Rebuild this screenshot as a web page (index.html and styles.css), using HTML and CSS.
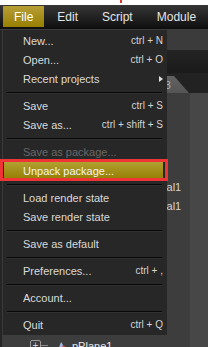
FILE: index.html
```html
<!DOCTYPE html>
<html>
<head>
<meta charset="utf-8">
<link rel="stylesheet" href="styles.css">
</head>
<body>
<div class="strip"><span class="mark"></span></div>
<nav class="menubar">
  <div class="mb-item active">File</div>
  <div class="mb-item">Edit</div>
  <div class="mb-item">Script</div>
  <div class="mb-item">Module</div>
</nav>
<main class="workspace">
  <div class="band-light"></div>
  <div class="band-dark"></div>
  <div class="tabbar"><div class="tab">Tab 3</div></div>
  <div class="panel">
    <div class="row mat first">Material1</div>
    <div class="row mat">Material1</div>
    <div class="row root">
      <span class="expander">+</span><span class="conn"></span>
      <svg class="obj-icon" width="10" height="10" viewBox="0 0 10 10">
        <polygon points="1,9 4,1 7,6" fill="#9fb6e8"/>
        <polygon points="4,1 7,6 5,3" fill="#e8eefc"/>
        <circle cx="6.5" cy="7.5" r="2.5" fill="#e0502a"/>
      </svg>
      <span class="label">pPlane1</span>
    </div>
  </div>
</main>

<div class="menu">
  <div class="item"><span>New...</span><span class="sc">ctrl + N</span></div>
  <div class="item"><span>Open...</span><span class="sc">ctrl + O</span></div>
  <div class="item"><span>Recent projects</span><span class="arrow"></span></div>
  <div class="sep"></div>
  <div class="item"><span>Save</span><span class="sc">ctrl + S</span></div>
  <div class="item"><span>Save as...</span><span class="sc">ctrl + shift + S</span></div>
  <div class="sep"></div>
  <div class="item disabled"><span>Save as package...</span></div>
  <div class="item active"><span>Unpack package...</span></div>
  <div class="sep"></div>
  <div class="item"><span>Load render state</span></div>
  <div class="item"><span>Save render state</span></div>
  <div class="sep"></div>
  <div class="item"><span>Save as default</span></div>
  <div class="sep"></div>
  <div class="item"><span>Preferences...</span><span class="sc">ctrl + ,</span></div>
  <div class="sep"></div>
  <div class="item"><span>Account...</span></div>
  <div class="sep"></div>
  <div class="item"><span>Quit</span><span class="sc">ctrl + Q</span></div>
</div>
<div class="callout"></div>
</body>
</html>
```
FILE: styles.css
```css
* { box-sizing: border-box; margin: 0; padding: 0; }
html, body { width: 208px; height: 347px; overflow: hidden; }
body {
  position: relative;
  display: flex;
  flex-direction: column;
  background: #3d3d3d;
  font-family: "Liberation Sans", Arial, sans-serif;
}
.strip { position: relative; flex: none; height: 5px; background: #fff; }
.mark { position: absolute; left: 120px; top: 0; width: 2px; height: 3px; background: #e23a2a; }

.menubar {
  flex: none;
  height: 25px;
  display: flex;
  gap: 2px;
  padding: 1px 0 2px 3px;
  background: linear-gradient(#363636, #0e0e0e);
  border-bottom: 1px solid #3c3c3c;
}
.mb-item {
  display: flex;
  align-items: center;
  padding: 0 11px;
  font-size: 12px;
  color: #e4e4e4;
}
.mb-item.active { background: linear-gradient(#b69e36, #977f02); color: #fff; }

.workspace {
  flex: 1;
  display: flex;
  flex-direction: column;
  border-left: 2px solid #252525;
  min-height: 0;
}
.band-light { flex: none; height: 20px; background: #3b3b3b; }
.band-dark { flex: none; height: 23px; background: linear-gradient(#242424, #1a1a1a); }
.tabbar {
  flex: none;
  height: 20px;
  display: flex;
  align-items: flex-end;
  padding-left: 138px;
  background: #222;
}
.tab {
  width: 49px;
  height: 17px;
  padding-left: 4px;
  display: flex;
  align-items: center;
  font-size: 11px;
  color: #b0b0b0;
  background: linear-gradient(#626262, #555);
  clip-path: polygon(0 0, 34px 0, 100% 100%, 0 100%);
}
.panel {
  flex: 1;
  display: flex;
  flex-direction: column;
  background: linear-gradient(90deg, #3d3d3d 0 188px, #474747 188px);
}
.row {
  flex: none;
  height: 19px;
  display: flex;
  align-items: center;
  white-space: nowrap;
  font-size: 11px;
  color: #d4d4d4;
}
.row.mat { padding-left: 134px; }
.row.mat.first { margin-top: 84px; }
.row.root { margin-top: 121px; padding-left: 28px; color: #e8e8e8; }
.expander {
  width: 11px;
  height: 11px;
  border: 1px solid #9a9a9a;
  border-radius: 2px;
  display: flex;
  align-items: center;
  justify-content: center;
  font-size: 10px;
  line-height: 1;
  color: #cfcfcf;
}
.conn { width: 7px; height: 1px; background: #8a8a8a; margin-right: 9px; }
.obj-icon { margin-right: 5px; }

.menu {
  position: absolute;
  left: 2px;
  top: 30px;
  width: 165px;
  padding: 1px 0;
  background: #272727;
  border-left: 1px solid #3a3a3a;
  font-size: 11px;
  color: #dadada;
}
.item {
  height: 19px;
  display: flex;
  align-items: center;
  justify-content: space-between;
  padding: 0 4px 0 20px;
  white-space: nowrap;
}
.item .sc { font-size: 10px; color: #d4d4d4; }
.item.disabled { color: #676767; }
.item.active {
  margin: 0 4px 0 1px;
  padding-left: 19px;
  color: #f4f4f4;
  background: linear-gradient(#b3a334, #937c00);
}
.arrow {
  width: 0;
  height: 0;
  border-left: 4px solid #e0e0e0;
  border-top: 3.5px solid transparent;
  border-bottom: 3.5px solid transparent;
}
.sep {
  height: 8px;
  display: flex;
  align-items: center;
  padding: 0 5px 0 4px;
}
.sep::before {
  content: "";
  flex: 1;
  height: 1px;
  background: #080808;
  box-shadow: 0 1px 0 #303030;
}
.callout {
  position: absolute;
  left: 0;
  top: 159px;
  width: 168px;
  height: 22px;
  border: 3px solid #ee3434;
}
```
